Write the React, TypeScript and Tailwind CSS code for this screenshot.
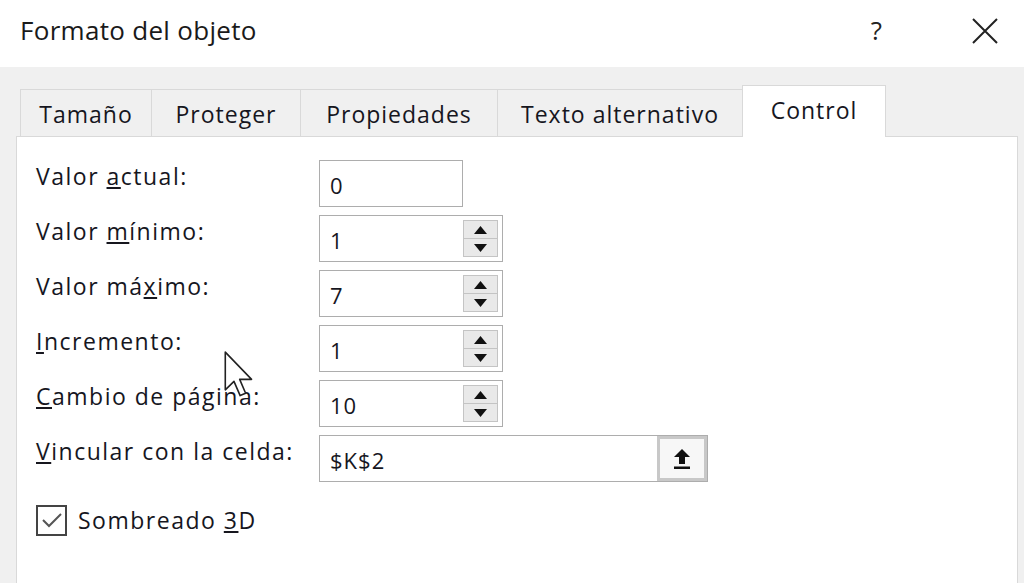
import type { ReactNode } from 'react';

const tabs = [
  { name: 'Tamaño', w: 'w-[132px]' },
  { name: 'Proteger', w: 'w-[149px]' },
  { name: 'Propiedades', w: 'w-[197px]' },
  { name: 'Texto alternativo', w: 'w-[245px]' },
];

type Row = { label: ReactNode; value: string; kind: 'plain' | 'spin' | 'ref' };

const rows: Row[] = [
  { label: <>Valor <u>a</u>ctual:</>, value: '0', kind: 'plain' },
  { label: <>Valor <u>m</u>ínimo:</>, value: '1', kind: 'spin' },
  { label: <>Valor má<u>x</u>imo:</>, value: '7', kind: 'spin' },
  { label: <><u>I</u>ncremento:</>, value: '1', kind: 'spin' },
  { label: <><u>C</u>ambio de página:</>, value: '10', kind: 'spin' },
  { label: <><u>V</u>incular con la celda:</>, value: '$K$2', kind: 'ref' },
];

function Spinner() {
  return (
    <div className="my-[4px] mr-[4px] w-[35px] flex flex-col border border-[#c4c4c4] bg-[#e9e9e9]">
      <div className="flex-1 flex items-center justify-center border-b border-[#c4c4c4]">
        <svg width="13" height="8" viewBox="0 0 13 8">
          <path d="M6.5 0 L13 8 L0 8 Z" fill="#111" />
        </svg>
      </div>
      <div className="flex-1 flex items-center justify-center">
        <svg width="13" height="8" viewBox="0 0 13 8">
          <path d="M0 0 L13 0 L6.5 8 Z" fill="#111" />
        </svg>
      </div>
    </div>
  );
}

function RefButton() {
  return (
    <div className="w-[50px] flex items-center justify-center border-[3px] border-[#c8c8c8] bg-[#f7f7f7]">
      <svg width="20" height="22" viewBox="0 0 20 22">
        <path d="M10 1 L18 9 L13 9 L13 16 L7 16 L7 9 L2 9 Z" fill="#111" />
        <rect x="2" y="18.5" width="16" height="2.5" fill="#111" />
      </svg>
    </div>
  );
}

export default function App() {
  return (
    <div
      className="w-[1024px] h-[583px] flex flex-col overflow-hidden bg-[#f0f0f0] text-[#16161e] relative"
      style={{ fontFamily: '"Open Sans", "Noto Sans", sans-serif' }}
    >
      {/* title bar */}
      <div className="h-[67px] bg-white flex items-center pl-[20px] pr-[26px]">
        <span className="text-[26px] tracking-[0.3px] text-[#1a1a1a] mt-[-6px]">Formato del objeto</span>
        <span className="ml-auto text-[26px] text-[#222] mt-[-6px]">?</span>
        <svg className="ml-[90px] mt-[-6px]" width="26" height="26" viewBox="0 0 26 26">
          <path d="M1 1 L25 25 M25 1 L1 25" stroke="#222" strokeWidth="2" />
        </svg>
      </div>

      {/* body */}
      <div className="flex-1 flex flex-col pl-[16px] pr-[6px] pt-[18px]">
        <div className="flex items-end pl-[4px] relative z-10 mb-[-1px]">
          {tabs.map((t) => (
            <div
              key={t.name}
              className={`${t.w} h-[48px] flex items-center justify-center border-t border-r border-[#d9d9d9] first:border-l text-[23px] tracking-[1px] pt-[2px]`}
            >
              {t.name}
            </div>
          ))}
          <div className="w-[144px] h-[52px] flex items-center justify-center bg-white border-t border-r border-l border-[#d9d9d9] text-[23px] tracking-[1px] ml-[-1px] pb-[2px]">
            Control
          </div>
        </div>

        <div className="flex-1 bg-white border border-b-0 border-[#d9d9d9] pl-[19px] pt-[23px]">
          <div className="flex flex-col gap-[8px]">
            {rows.map((r, i) => (
              <div key={i} className="flex items-start h-[47px]">
                <div className="w-[283px] text-[23px] tracking-[1.5px] leading-[30px] pt-[1px]">{r.label}</div>
                <div
                  className={`h-[47px] flex border border-[#adadad] bg-white ${
                    r.kind === 'plain' ? 'w-[144px]' : r.kind === 'spin' ? 'w-[184px]' : 'w-[389px]'
                  }`}
                >
                  <div className="flex-1 pl-[10px] pt-[9px] text-[22px] tracking-[1px] leading-[30px]">{r.value}</div>
                  {r.kind === 'spin' && <Spinner />}
                  {r.kind === 'ref' && <RefButton />}
                </div>
              </div>
            ))}
          </div>

          <div className="flex items-center mt-[21px] gap-[11px]">
            <div className="w-[31px] h-[31px] border-2 border-[#444] flex items-center justify-center">
              <svg width="22" height="18" viewBox="0 0 22 18">
                <path d="M2 9 L8 15 L20 3" stroke="#555" strokeWidth="2" fill="none" />
              </svg>
            </div>
            <span className="text-[23px] tracking-[1.5px]">
              Sombreado <u>3</u>D
            </span>
          </div>
        </div>
      </div>

      {/* mouse cursor */}
      <svg className="absolute left-[224px] top-[351px]" width="30" height="48" viewBox="0 0 13 21">
        <path
          d="M0.5 0.5 L0.5 17 L4.3 13.3 L7 19.5 L9.4 18.5 L6.8 12.4 L12 12.4 Z"
          fill="#fff"
          stroke="#222"
          strokeWidth="0.7"
          strokeLinejoin="round"
        />
      </svg>
    </div>
  );
}
